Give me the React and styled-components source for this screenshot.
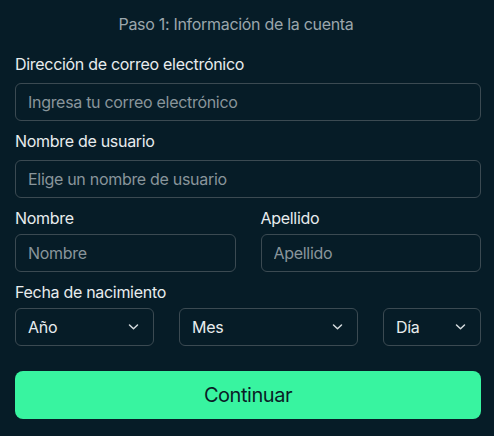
import React from 'react'
import styled, { createGlobalStyle } from 'styled-components'

const GlobalStyle = createGlobalStyle`
  html, body {
    margin: 0;
    padding: 0;
    background: #061c27;
  }
  body {
    font-family: Inter, "Noto Sans", "Liberation Sans", sans-serif;
    -webkit-font-smoothing: antialiased;
  }
  * {
    box-sizing: border-box;
  }
`;

const Form = styled.form`
  display: flex;
  flex-direction: column;
  width: 494px;
  height: 436px;
  padding: 14px 13px 0 15px;
  background: #061c27;
  letter-spacing: -0.3px;
`;

const Title = styled.h2`
  margin: 0 0 20px;
  padding-right: 24px;
  font-size: 16px;
  font-weight: 400;
  line-height: 20px;
  text-align: center;
  color: #9ba6ac;
`;

const Field = styled.div`
  display: flex;
  flex-direction: column;
  margin-bottom: 10px;
`;

const Label = styled.label`
  font-size: 16px;
  line-height: 20px;
  color: #e8ecee;
  margin-bottom: ${(p) => (p.$tight ? '6px' : '9px')};
`;

const Row = styled.div`
  display: grid;
  grid-template-columns: ${(p) => p.$cols};
  column-gap: 25px;
`;

const TextInput = styled.input`
  width: 100%;
  height: 38px;
  padding: 0 12px;
  border: 1px solid #3b4a52;
  border-radius: 6px;
  background: transparent;
  color: #e8ecee;
  font-family: inherit;
  font-size: 16px;
  letter-spacing: inherit;
  outline: none;

  &::placeholder {
    color: #89959b;
  }
`;

const SelectWrap = styled.div`
  position: relative;
  height: 38px;
`;

const Select = styled.select`
  appearance: none;
  width: 100%;
  height: 100%;
  padding: 0 12px;
  border: 1px solid #3b4a52;
  border-radius: 6px;
  background: transparent;
  color: #e8ecee;
  font-family: inherit;
  font-size: 16px;
  letter-spacing: inherit;
  outline: none;
`;

const Chevron = styled.svg`
  position: absolute;
  right: 15px;
  top: 50%;
  width: 11px;
  height: 7px;
  transform: translateY(-50%);
  pointer-events: none;
`;

const Button = styled.button`
  margin-top: 15px;
  height: 48px;
  border: none;
  border-radius: 8px;
  background: #38f4a0;
  color: #0a1c26;
  font-family: inherit;
  font-size: 20px;
  letter-spacing: -0.45px;
  cursor: pointer;
`;

const DateSelect = ({ label }) => (
  <SelectWrap>
    <Select defaultValue="">
      <option value="">{label}</option>
    </Select>
    <Chevron viewBox="0 0 11 7">
      <path d="M1.5 1.5 L5.5 5.2 L9.5 1.5" fill="none" stroke="#d5dbde" strokeWidth="1.5" strokeLinecap="round" strokeLinejoin="round" />
    </Chevron>
  </SelectWrap>
)

const App = () => {
  return (
    <>
      <GlobalStyle />
      <Form onSubmit={(e) => e.preventDefault()}>
        <Title>Paso 1: Información de la cuenta</Title>
        <Field>
          <Label>Dirección de correo electrónico</Label>
          <TextInput type="email" placeholder="Ingresa tu correo electrónico" />
        </Field>
        <Field>
          <Label>Nombre de usuario</Label>
          <TextInput placeholder="Elige un nombre de usuario" />
        </Field>
        <Row $cols="1fr 1fr">
          <Field>
            <Label $tight>Nombre</Label>
            <TextInput placeholder="Nombre" />
          </Field>
          <Field>
            <Label $tight>Apellido</Label>
            <TextInput placeholder="Apellido" />
          </Field>
        </Row>
        <Field>
          <Label $tight>Fecha de nacimiento</Label>
          <Row $cols="139fr 179fr 98fr">
            <DateSelect label="Año" />
            <DateSelect label="Mes" />
            <DateSelect label="Día" />
          </Row>
        </Field>
        <Button type="submit">Continuar</Button>
      </Form>
    </>
  )
}

export default App
